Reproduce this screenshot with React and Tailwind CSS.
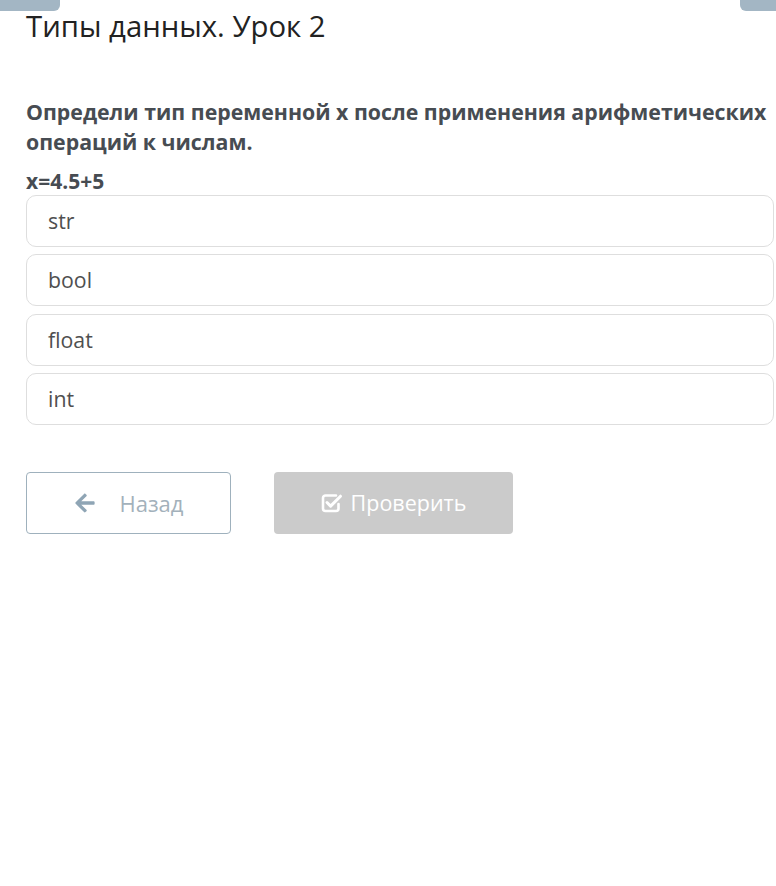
import { FaArrowLeft } from "react-icons/fa";

const options = ["str", "bool", "float", "int"];

// Outlined box with a check that breaks out of the top-right corner
const CheckSquareIcon = () => (
  <svg width="22" height="20" viewBox="0 0 22 20" fill="none">
    <path
      d="M15 2.5H4.5A2.5 2.5 0 0 0 2 5v10.5A2.5 2.5 0 0 0 4.5 18H15a2.5 2.5 0 0 0 2.5-2.5V11"
      stroke="currentColor"
      strokeWidth="2.6"
      strokeLinecap="round"
    />
    <path
      d="M6 9.5l3.6 3.6L19.5 3.2"
      stroke="currentColor"
      strokeWidth="3"
      strokeLinecap="round"
      strokeLinejoin="round"
    />
  </svg>
);

export default function App() {
  return (
    <div
      className="relative min-h-[886px] w-[776px] bg-white"
      style={{ fontFamily: '"Open Sans", sans-serif' }}
    >
      {/* Top tabs peeking in */}
      <div className="absolute left-0 top-0 h-[11px] w-[60px] rounded-br-[6px] bg-[#a3b6c4]" />
      <div className="absolute right-0 top-0 h-[11px] w-[36px] rounded-bl-[6px] bg-[#a3b6c4]" />

      <div className="pl-[26px] pr-[2px] pt-[7px]">
        <h1 className="text-[29.3px] leading-[38px] text-[#222]">
          Типы данных. Урок 2
        </h1>

        <p className="mt-[52px] text-[21.3px] font-bold leading-[30px] text-[#474c52]">
          Определи тип переменной x после применения арифметических
          операций к числам.
        </p>
        <p className="mt-[12px] text-[21px] font-bold leading-[24px] text-[#474c52]">
          x=4.5+5
        </p>

        <div className="mt-[2px] flex flex-col gap-[7.4px]">
          {options.map((o) => (
            <div
              key={o}
              className="flex h-[52px] items-center rounded-[10px] border border-[#dedede] px-[21px] text-[21.3px] text-[#4f4f4f]"
            >
              {o}
            </div>
          ))}
        </div>

        <div className="mt-[47px] flex gap-[43px]">
          <button className="flex h-[62px] w-[205px] items-center justify-center gap-[24px] rounded-[4px] border border-[#9fb1bd] bg-white text-[22px] text-[#a3b1bb]">
            <FaArrowLeft className="h-[22px] w-[22px] text-[#8fa5b5]" />
            Назад
          </button>
          <button className="flex h-[62px] w-[239px] items-center justify-center gap-[8px] rounded-[4px] bg-[#cbcbcb] text-[21.5px] text-white">
            <CheckSquareIcon />
            Проверить
          </button>
        </div>
      </div>
    </div>
  );
}
